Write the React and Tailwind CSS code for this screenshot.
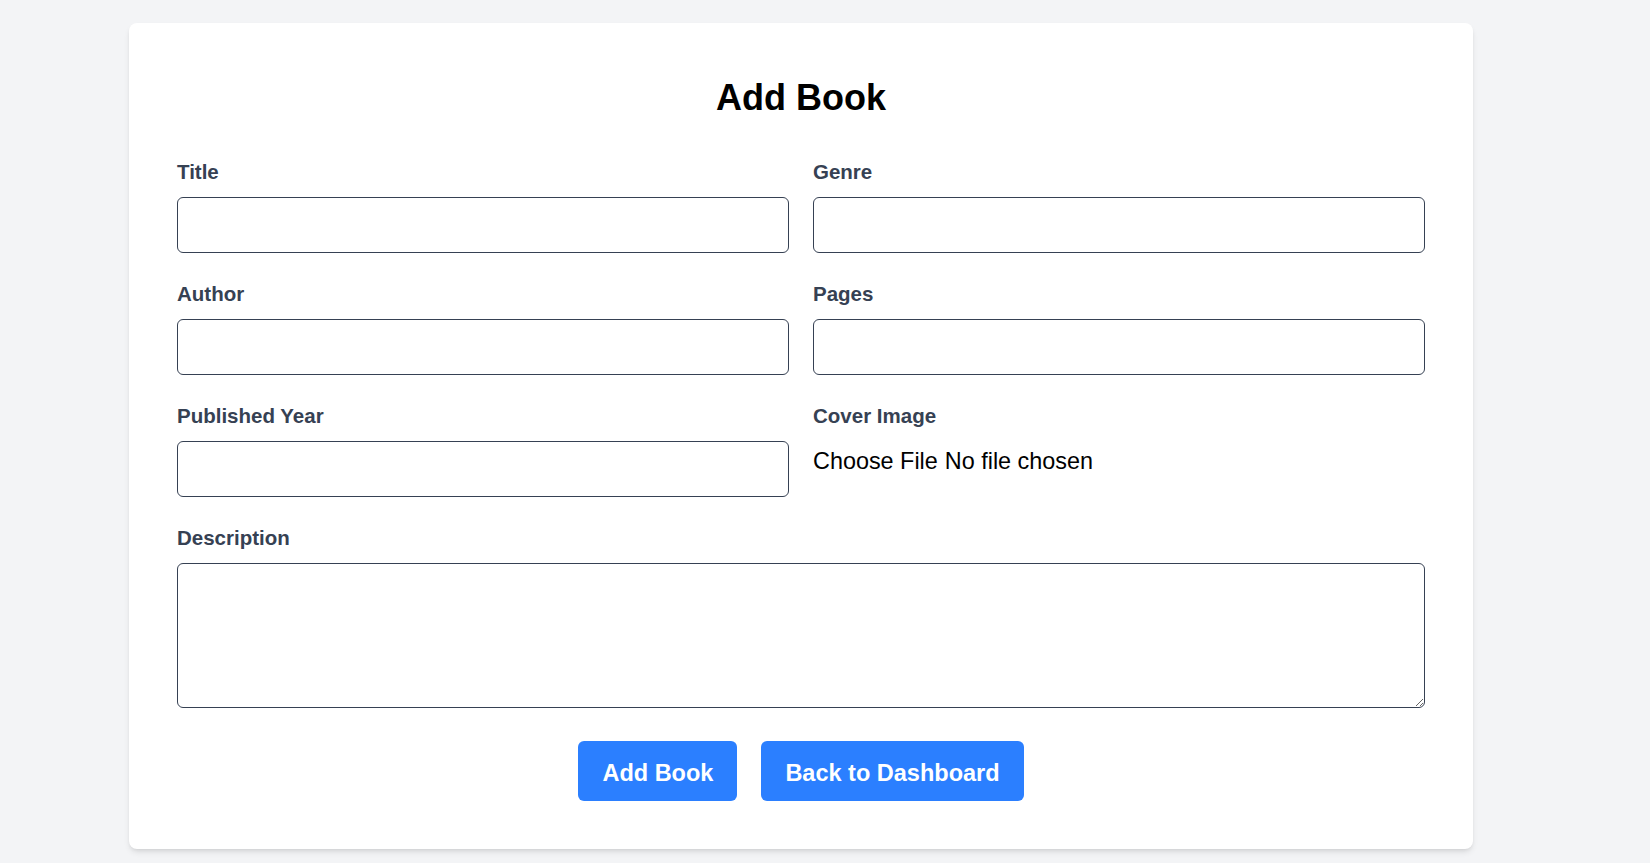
export default function App() {
  const labelCls = "block text-[20.5px] leading-[30px] font-bold text-[#364153] pt-[2px] mb-[10px]";
  const inputCls = "block w-full h-[56px] border border-[#364153] rounded-md bg-white px-3";
  const btnCls = "h-[60px] px-6 pt-[3px] bg-blue-500 text-white font-bold text-[23.5px] leading-[36px] rounded-md";
  return (
    <div className="min-h-screen bg-gray-100 pt-[23px] pb-[14px] font-['Liberation_Sans',Arial,sans-serif]">
      <div className="ml-[129px] w-[1344px] bg-white rounded-lg shadow-md p-12">
        <h1 className="text-center text-[36px] leading-[48px] font-bold text-black mt-[3px] mb-[33px]">Add Book</h1>
        <form className="grid grid-cols-2 gap-x-6 gap-y-6" onSubmit={(e) => e.preventDefault()}>
          <div>
            <label className={labelCls}>Title</label>
            <input type="text" className={inputCls} />
          </div>
          <div>
            <label className={labelCls}>Genre</label>
            <input type="text" className={inputCls} />
          </div>
          <div>
            <label className={labelCls}>Author</label>
            <input type="text" className={inputCls} />
          </div>
          <div>
            <label className={labelCls}>Pages</label>
            <input type="number" className={inputCls} />
          </div>
          <div>
            <label className={labelCls}>Published Year</label>
            <input type="number" className={inputCls} />
          </div>
          <div>
            <label className={labelCls}>Cover Image</label>
            <div className="pt-[2px]">
              <input type="file" className="block text-[23.4px] leading-[36px] text-black file:mr-[7px]" />
            </div>
          </div>
          <div className="col-span-2">
            <label className={labelCls}>Description</label>
            <textarea className="block w-full h-[145px] border border-[#364153] rounded-md bg-white px-3 py-2"></textarea>
          </div>
          <div className="col-span-2 flex justify-center gap-6 mt-[9px]">
            <button type="submit" className={btnCls}>Add Book</button>
            <button type="button" className={btnCls}>Back to Dashboard</button>
          </div>
        </form>
      </div>
    </div>
  );
}
